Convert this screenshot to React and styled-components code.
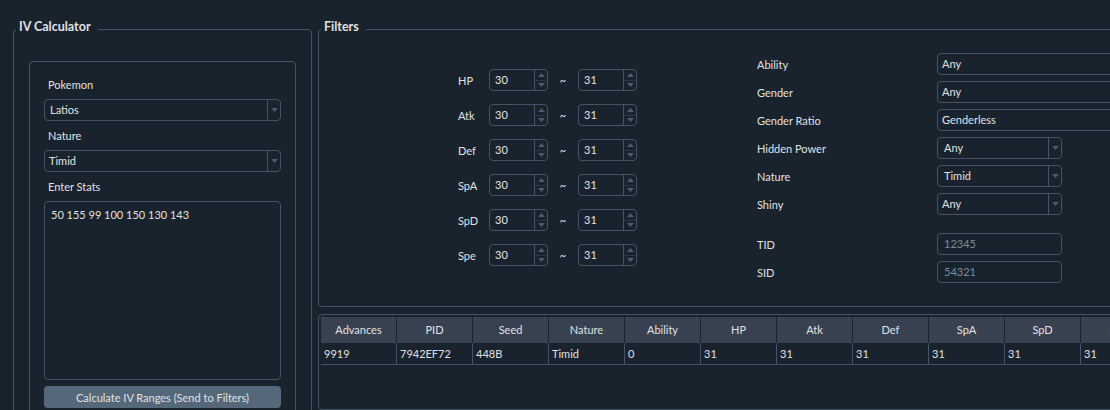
import React from 'react'
import styled, { createGlobalStyle } from 'styled-components'

const GlobalStyle = createGlobalStyle`
  body {
    margin: 0;
    background: #19232d;
    color: #e0e1e3;
    font-family: Lato, "Liberation Sans", sans-serif;
    font-size: 11px;
  }
`

const Window = styled.div`
  width: 1110px;
  height: 410px;
  overflow: hidden;
  box-sizing: border-box;
  padding: 20px 0 0 13px;
  display: flex;
  gap: 6px;
`

const GroupBox = styled.fieldset`
  margin: 0;
  padding: 0;
  border: 1px solid #455364;
  border-radius: 4px;
  box-sizing: border-box;
  width: ${p => p.$width};
  height: ${p => p.$height};
  min-width: 0;
  flex-shrink: 0;
`

const Title = styled.legend`
  font-weight: bold;
  font-size: 12.5px;
  line-height: 14px;
  padding: 0 7px 4px 3px;
  margin-left: 2px;
`

const Frame = styled.div`
  margin: 23px 15px 0;
  border: 1px solid #455364;
  border-radius: 4px;
  padding: 14px 14px 20px 14px;
  display: flex;
  flex-direction: column;
  gap: 6px;
`

const FieldLabel = styled.div`
  height: 17px;
  line-height: 17px;
  padding-left: 4px;
`

const Combo = styled.div`
  width: ${p => p.$width || 'auto'};
  height: 22px;
  box-sizing: border-box;
  border: 1px solid #455364;
  border-radius: 4px;
  display: flex;
  flex-shrink: 0;
`

const ComboText = styled.div`
  flex: 1;
  line-height: 20px;
  padding-left: ${p => p.$pad || 5}px;
  color: ${p => (p.$disabled ? '#788d9c' : '#e0e1e3')};
`

const DropButton = styled.div`
  width: 13px;
  box-sizing: border-box;
  border-left: 1px solid #455364;
  display: flex;
  align-items: center;
  justify-content: center;
`

const StatsInput = styled.textarea`
  height: 179px;
  box-sizing: border-box;
  margin: 0;
  padding: 6px;
  background: #19232d;
  color: #e0e1e3;
  border: 1px solid #455364;
  border-radius: 4px;
  font: inherit;
  line-height: 14px;
  resize: none;
  outline: none;
`

const Button = styled.button`
  height: 22px;
  border: none;
  border-radius: 4px;
  background: #54687a;
  color: #e0e1e3;
  font: inherit;
  padding: 0;
`

const RightColumn = styled.div`
  width: 820px;
  flex-shrink: 0;
  display: flex;
  flex-direction: column;
  gap: 7px;
`

const FilterBody = styled.div`
  display: flex;
  align-items: flex-start;
`

const StatsGrid = styled.div`
  margin: 31px 0 0 139px;
  display: grid;
  grid-template-columns: 31px 59px 30px 59px;
  grid-auto-rows: 22px;
  row-gap: 13px;
  align-items: center;
`

const Tilde = styled.div`
  text-align: center;
`

const SpinBox = styled.div`
  height: 22px;
  box-sizing: border-box;
  border: 1px solid #455364;
  border-radius: 4px;
  display: flex;
`

const SpinText = styled.div`
  flex: 1;
  line-height: 20px;
  padding-left: 5px;
`

const SpinButtons = styled.div`
  width: 13px;
  box-sizing: border-box;
  border-left: 1px solid #455364;
  display: flex;
  flex-direction: column;
`

const SpinHalf = styled.div`
  flex: 1;
  display: flex;
  align-items: center;
  justify-content: center;
  border-top: ${p => (p.$lower ? '1px solid #2c3844' : 'none')};
`

const FormColumn = styled.div`
  margin: 15px 0 0 120px;
  display: flex;
  flex-direction: column;
  gap: 6px;
`

const FormRow = styled.div`
  display: flex;
  align-items: center;
  height: 22px;
`

const FormLabel = styled.div`
  width: 180px;
  flex-shrink: 0;
`

const Spacer = styled.div`
  height: 6px;
`

const TableFrame = styled.div`
  height: 200px;
  border: 1px solid #455364;
  border-radius: 4px;
  padding: 2px 0 0 2px;
`

const TableGrid = styled.div`
  display: grid;
  grid-template-columns: repeat(11, 76px);
`

const HeaderCell = styled.div`
  height: 26px;
  line-height: 26px;
  text-align: center;
  background: #37414f;
  border-right: 1px solid #19232d;
`

const Cell = styled.div`
  height: 22px;
  box-sizing: border-box;
  line-height: 21px;
  padding-left: 3px;
  border-right: 1px solid #455364;
  border-bottom: 1px solid #455364;
`

const Arrow = ({ up }) => (
  <svg width="7" height="4" viewBox="0 0 7 4">
    <path d={up ? 'M0 4 L3.5 0 L7 4 Z' : 'M0 0 L7 0 L3.5 4 Z'} fill="#4b5b6c" />
  </svg>
)

const ComboBox = ({ value, width, pad }) => (
  <Combo $width={width}>
    <ComboText $pad={pad}>{value}</ComboText>
    <DropButton>
      <Arrow />
    </DropButton>
  </Combo>
)

const Spin = ({ value }) => (
  <SpinBox>
    <SpinText>{value}</SpinText>
    <SpinButtons>
      <SpinHalf>
        <Arrow up />
      </SpinHalf>
      <SpinHalf $lower>
        <Arrow />
      </SpinHalf>
    </SpinButtons>
  </SpinBox>
)

const stats = ['HP', 'Atk', 'Def', 'SpA', 'SpD', 'Spe']
const columns = ['Advances', 'PID', 'Seed', 'Nature', 'Ability', 'HP', 'Atk', 'Def', 'SpA', 'SpD', 'Spe']
const row = ['9919', '7942EF72', '448B', 'Timid', '0', '31', '31', '31', '31', '31', '31']

export default function App() {
  return (
    <>
      <GlobalStyle />
      <Window>
        <GroupBox $width="299px" $height="420px">
          <Title>IV Calculator</Title>
          <Frame>
            <FieldLabel>Pokemon</FieldLabel>
            <ComboBox value="Latios" />
            <FieldLabel>Nature</FieldLabel>
            <ComboBox value="Timid" pad={4} />
            <FieldLabel>Enter Stats</FieldLabel>
            <StatsInput defaultValue="50 155 99 100 150 130 143" spellCheck={false} />
            <Button>Calculate IV Ranges (Send to Filters)</Button>
          </Frame>
        </GroupBox>

        <RightColumn>
          <GroupBox $height="287px">
            <Title>Filters</Title>
            <FilterBody>
              <StatsGrid>
                {stats.map(s => (
                  <React.Fragment key={s}>
                    <div>{s}</div>
                    <Spin value="30" />
                    <Tilde>~</Tilde>
                    <Spin value="31" />
                  </React.Fragment>
                ))}
              </StatsGrid>
              <FormColumn>
                <FormRow>
                  <FormLabel>Ability</FormLabel>
                  <Combo $width="260px"><ComboText $pad={4}>Any</ComboText></Combo>
                </FormRow>
                <FormRow>
                  <FormLabel>Gender</FormLabel>
                  <Combo $width="260px"><ComboText $pad={4}>Any</ComboText></Combo>
                </FormRow>
                <FormRow>
                  <FormLabel>Gender Ratio</FormLabel>
                  <Combo $width="260px"><ComboText $pad={4}>Genderless</ComboText></Combo>
                </FormRow>
                <FormRow>
                  <FormLabel>Hidden Power</FormLabel>
                  <ComboBox value="Any" width="125px" pad={6} />
                </FormRow>
                <FormRow>
                  <FormLabel>Nature</FormLabel>
                  <ComboBox value="Timid" width="125px" pad={6} />
                </FormRow>
                <FormRow>
                  <FormLabel>Shiny</FormLabel>
                  <ComboBox value="Any" width="125px" pad={4} />
                </FormRow>
                <Spacer />
                <FormRow>
                  <FormLabel>TID</FormLabel>
                  <Combo $width="125px"><ComboText $pad={6} $disabled>12345</ComboText></Combo>
                </FormRow>
                <FormRow>
                  <FormLabel>SID</FormLabel>
                  <Combo $width="125px"><ComboText $pad={6} $disabled>54321</ComboText></Combo>
                </FormRow>
              </FormColumn>
            </FilterBody>
          </GroupBox>

          <TableFrame>
            <TableGrid>
              {columns.map((c, i) => (
                <HeaderCell key={i}>{c}</HeaderCell>
              ))}
              {row.map((v, i) => (
                <Cell key={i}>{v}</Cell>
              ))}
            </TableGrid>
          </TableFrame>
        </RightColumn>
      </Window>
    </>
  )
}
